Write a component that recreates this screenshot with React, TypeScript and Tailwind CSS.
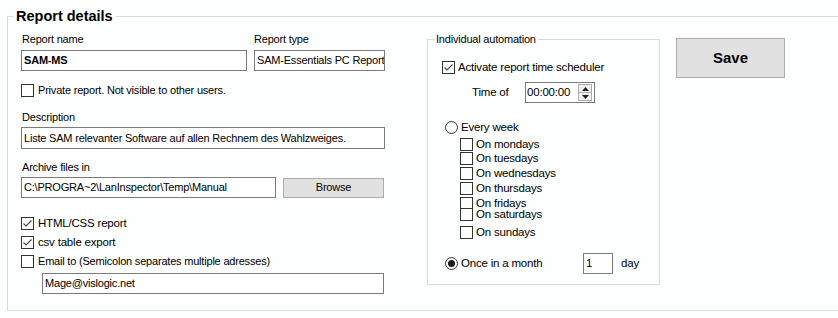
import { ReactNode } from "react";

function CheckBox({ checked = false }: { checked?: boolean }) {
  return (
    <span className="flex h-[13px] w-[13px] shrink-0 items-center justify-center border border-[#333333] bg-white">
      {checked && (
        <svg width="11" height="11" viewBox="0 0 11 11">
          <path d="M1.5 5.5 L4 8 L9.5 2.5" fill="none" stroke="#444444" strokeWidth="1.1" />
        </svg>
      )}
    </span>
  );
}

function Radio({ checked = false }: { checked?: boolean }) {
  return (
    <span className="flex h-[13px] w-[13px] shrink-0 items-center justify-center rounded-full border border-[#333333] bg-white">
      {checked && <span className="h-[7px] w-[7px] rounded-full bg-[#1a1a1a]" />}
    </span>
  );
}

function CheckRow({ checked, children, className }: { checked?: boolean; children: ReactNode; className?: string }) {
  return (
    <div className={"flex h-[13px] items-center gap-[4px] " + (className ?? "")}>
      <CheckBox checked={checked} />
      <span className="leading-[13px] whitespace-nowrap">{children}</span>
    </div>
  );
}

function DayRow({ label, className }: { label: string; className: string }) {
  return (
    <div className={"flex h-[13px] items-center gap-[3px] pl-[18px] " + className}>
      <CheckBox />
      <span className="text-[11.5px] leading-[13px] whitespace-nowrap">{label}</span>
    </div>
  );
}

export default function App() {
  return (
    <div className="h-[318px] w-[838px] overflow-hidden bg-[#fdfefe] pt-[8px] font-['Liberation_Sans',Arial,sans-serif] text-[11px] tracking-[-0.2px] text-black">
      <fieldset className="ml-[7px] h-[303px] w-[850px] border border-[#dadada] p-0">
        <legend className="ml-[5px] px-[3px] text-[14.5px] font-bold leading-[16px] tracking-normal">Report details</legend>
        <div className="flex pl-[13px]">
          {/* left column */}
          <div className="flex w-[364px] flex-col">
            <div className="mt-[9px] flex gap-[7px]">
              <div className="flex w-[226px] flex-col">
                <div className="h-[13px] pl-px leading-[13px]">Report name</div>
                <div className="mt-[4px] flex h-[21px] items-center border border-[#7a7a7a] bg-white px-[2px] font-bold">SAM-MS</div>
              </div>
              <div className="flex w-[131px] flex-col">
                <div className="h-[13px] leading-[13px]">Report type</div>
                <div className="mt-[4px] flex h-[21px] items-center overflow-hidden whitespace-nowrap border border-[#7a7a7a] bg-white px-[2px]">
                  SAM-Essentials PC Report
                </div>
              </div>
            </div>
            <CheckRow className="mt-[13px]">Private report. Not visible to other users.</CheckRow>

            <div className="mt-[14px] h-[13px] pl-px leading-[13px]">Description</div>
            <div className="mt-[3px] flex h-[22px] items-center border border-[#7a7a7a] bg-white px-[2px]">
              Liste SAM relevanter Software auf allen Rechnem des Wahlzweiges.
            </div>

            <div className="mt-[12px] h-[13px] pl-px leading-[13px]">Archive files in</div>
            <div className="mt-[3px] flex items-center gap-[7px]">
              <div className="flex h-[21px] w-[255px] items-center border border-[#7a7a7a] bg-white px-[2px]">
                C:\PROGRA~2\LanInspector\Temp\Manual
              </div>
              <button className="flex h-[20px] w-[101px] items-center justify-center border border-[#adadad] bg-[#e1e1e1]">
                Browse
              </button>
            </div>

            <CheckRow checked className="mt-[19px] text-[11.5px]">HTML/CSS report</CheckRow>
            <CheckRow checked className="mt-[6px] text-[11.5px]">csv table export</CheckRow>
            <CheckRow className="mt-[6px]">Email to (Semicolon separates multiple adresses)</CheckRow>
            <div className="ml-[21px] mt-[5px] flex h-[21px] w-[342px] items-center border border-[#7a7a7a] bg-white px-[2px]">
              Mage@vislogic.net
            </div>
          </div>

          {/* automation group */}
          <fieldset className="ml-[42px] mt-[8px] h-[253px] w-[233px] border border-[#dadada] p-0">
            <legend className="ml-[6px] px-[2px] leading-[14px]">Individual automation</legend>
            <div className="flex flex-col pl-[14px]">
              <CheckRow checked className="mt-[15px] !gap-[3px] text-[11.5px]">Activate report time scheduler</CheckRow>
              <div className="mt-[8px] flex h-[21px] items-center pl-[30px] text-[11.5px]">
                <span className="w-[53px]">Time of</span>
                <div className="flex h-[21px] w-[70px] items-center justify-between border border-[#7a7a7a] bg-white pl-[1px] pr-[2px]">
                  <span>00:00:00</span>
                  <div className="flex h-[17px] w-[14px] flex-col border border-[#adadad] bg-[#f0f0f0]">
                    <div className="flex flex-1 items-center justify-center border-b border-[#adadad]">
                      <svg width="7" height="4" viewBox="0 0 7 4">
                        <path d="M0 4 L3.5 0 L7 4 Z" fill="#222" />
                      </svg>
                    </div>
                    <div className="flex flex-1 items-center justify-center">
                      <svg width="7" height="4" viewBox="0 0 7 4">
                        <path d="M0 0 L3.5 4 L7 0 Z" fill="#222" />
                      </svg>
                    </div>
                  </div>
                </div>
              </div>

              <div className="mt-[18px] flex h-[13px] items-center gap-[3px] pl-[3px] text-[11.5px]">
                <Radio />
                <span className="leading-[13px]">Every week</span>
              </div>
              <DayRow label="On mondays" className="mt-[4px]" />
              <DayRow label="On tuesdays" className="mt-[1px]" />
              <DayRow label="On wednesdays" className="mt-[2px]" />
              <DayRow label="On thursdays" className="mt-[2px]" />
              <DayRow label="On fridays" className="mt-[2px]" />
              <DayRow label="On saturdays" className="mt-[-2px]" />
              <DayRow label="On sundays" className="mt-[5px]" />

              <div className="mt-[14px] flex h-[21px] items-center pl-[3px] text-[11.5px]">
                <Radio checked />
                <span className="ml-[3px] w-[122px] leading-[13px]">Once in a month</span>
                <div className="flex h-[21px] w-[30px] items-center border border-[#7a7a7a] bg-white px-[2px]">1</div>
                <span className="ml-[8px]">day</span>
              </div>
            </div>
          </fieldset>

          <button className="ml-[16px] mt-[14px] flex h-[40px] w-[109px] items-center justify-center self-start border border-[#adadad] bg-[#e1e1e1] text-[15px] font-bold tracking-normal">
            Save
          </button>
        </div>
      </fieldset>
    </div>
  );
}
